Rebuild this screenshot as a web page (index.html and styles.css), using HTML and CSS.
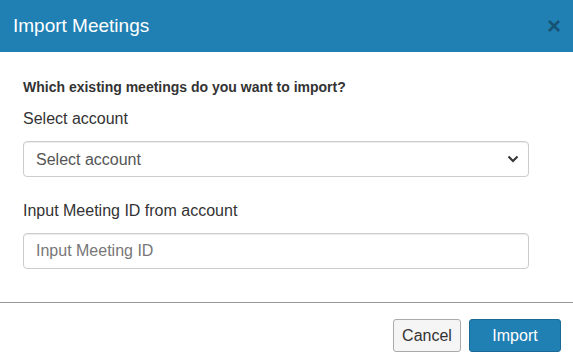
FILE: index.html
```html
<!DOCTYPE html>
<html lang="en">
<head>
  <meta charset="UTF-8">
  <title>Import Meetings</title>
  <link rel="stylesheet" href="styles.css">
</head>
<body>
  <div class="modal">
    <div class="modal-header">
      <h3 class="modal-title">Import Meetings</h3>
      <button class="close" title="Close">&times;</button>
    </div>
    <div class="modal-body">
      <p class="lead">Which existing meetings do you want to import?</p>
      <div class="field">
        <label for="account">Select account</label>
        <div class="select-wrap">
          <select id="account">
            <option>Select account</option>
          </select>
          <svg class="chevron" width="12" height="8" viewBox="0 0 12 8"><path d="M1.5 1.5 6 6l4.5-4.5" fill="none" stroke="#333" stroke-width="2"/></svg>
        </div>
      </div>
      <div class="field">
        <label for="meeting-id">Input Meeting ID from account</label>
        <input id="meeting-id" type="text" placeholder="Input Meeting ID">
      </div>
    </div>
    <div class="modal-footer">
      <button class="btn btn-default">Cancel</button>
      <button class="btn btn-primary">Import</button>
    </div>
  </div>
</body>
</html>
```

FILE: styles.css
```css
:root { --blue: #2180b3; --blue-dark: #1a6a95; --text: #333; --border: #ccc; --font: "Liberation Sans", Arial, sans-serif; }
* { box-sizing: border-box; }
body { margin: 0; font-family: var(--font); color: var(--text); background: #fff; }
.modal { width: 573px; height: 364px; display: flex; flex-direction: column; }
.modal-header { height: 52px; flex: none; background: var(--blue); display: flex; align-items: center; justify-content: space-between; padding: 0 12px 0 13px; }
.modal-title { margin: 0; font-size: 19px; font-weight: 400; color: #fff; }
.close { border: none; background: none; padding: 0; font-family: var(--font); font-size: 24px; font-weight: 700; line-height: 1; color: #000; opacity: 0.35; cursor: pointer; }
.modal-body { padding: 25px 44px 33px 23px; }
.lead { margin: 0 0 12px; font-size: 14px; font-weight: 700; line-height: 20px; color: #333; }
.field { display: flex; flex-direction: column; gap: 12px; margin-bottom: 24px; }
.field:last-child { margin-bottom: 0; }
.field label { font-size: 16px; line-height: 20px; color: #333; }
.select-wrap { position: relative; }
select, input { display: block; width: 100%; height: 36px; padding: 0 12px; border: 1px solid var(--border); border-radius: 4px; font-family: var(--font); font-size: 16px; color: #555; background: #fff; box-shadow: inset 0 1px 1px rgba(0,0,0,0.075); outline: none; }
select { appearance: none; -webkit-appearance: none; }
input::placeholder { color: #777; }
.chevron { position: absolute; right: 10px; top: 14px; pointer-events: none; }
.modal-footer { border-top: 1px solid #999; padding: 16px 12px 0; display: flex; justify-content: flex-end; gap: 8px; }
.btn { height: 33px; padding: 0; border: 1px solid; border-radius: 3px; font-family: var(--font); font-size: 16px; cursor: pointer; }
.btn-default { background: #f5f5f5; border-color: #aaa; color: #333; width: 68px; }
.btn-primary { background: var(--blue); border-color: var(--blue-dark); color: #fff; width: 92px; }
```
